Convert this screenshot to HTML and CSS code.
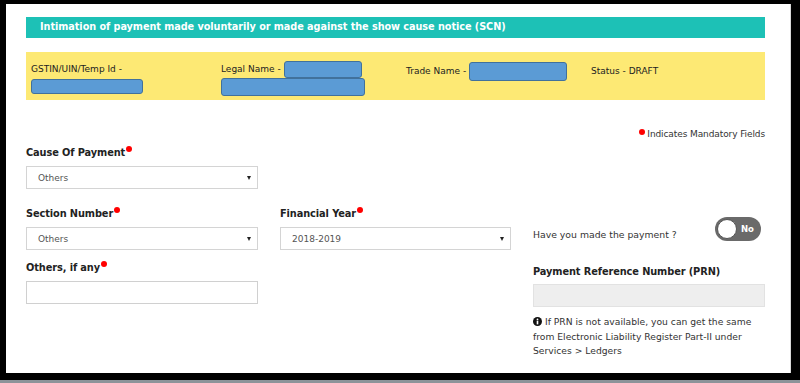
FILE: index.html
```html
<!DOCTYPE html>
<html>
<head>
<meta charset="utf-8">
<link rel="stylesheet" href="styles.css">
</head>
<body>
<div class="frame">
  <div class="panel">
    <div class="title">Intimation of payment made voluntarily or made against the show cause notice (SCN)</div>
    <div class="band">
      <div class="cell c1">
        <div class="line">GSTIN/UIN/Temp Id -</div>
        <div class="line"><span class="mask m-gstin"></span></div>
      </div>
      <div class="cell c2">
        <div class="line">Legal Name - <span class="mask m-legal1"></span></div>
        <div class="line"><span class="mask m-legal2"></span></div>
      </div>
      <div class="cell c3">
        <div class="line">Trade Name - <span class="mask m-trade"></span></div>
      </div>
      <div class="cell c4">
        <div class="line">Status - DRAFT</div>
      </div>
    </div>

    <div class="mandatory"><span class="dot"></span>Indicates Mandatory Fields</div>

    <div class="form">
      <div class="field f-cause">
        <label class="lbl">Cause Of Payment<span class="dot"></span></label>
        <div class="select"><span>Others</span><i class="caret"></i></div>
      </div>

      <div class="field f-section">
        <label class="lbl">Section Number<span class="dot"></span></label>
        <div class="select"><span>Others</span><i class="caret"></i></div>
      </div>
      <div class="field f-year">
        <label class="lbl">Financial Year<span class="dot"></span></label>
        <div class="select"><span>2018-2019</span><i class="caret"></i></div>
      </div>
      <div class="field f-paid">
        <span class="q">Have you made the payment ?</span>
        <span class="toggle"><span class="knob"></span><span class="no">No</span></span>
      </div>

      <div class="field f-others">
        <label class="lbl">Others, if any<span class="dot"></span></label>
        <div class="input"></div>
      </div>
      <div class="field f-prn">
        <label class="lbl">Payment Reference Number (PRN)</label>
        <div class="input disabled"></div>
        <p class="info"><svg class="icon" viewBox="0 0 10 10" width="9" height="9"><circle cx="5" cy="5" r="5" fill="#111"/><rect x="4.1" y="4.2" width="1.8" height="4" fill="#fff"/><circle cx="5" cy="2.7" r="1" fill="#fff"/></svg> If PRN is not available, you can get the same from Electronic Liability Register Part-II under Services &gt; Ledgers</p>
      </div>
    </div>
  </div>
  <div class="strip"></div>
</div>
</body>
</html>
```

FILE: styles.css
```css
html, body {
  margin: 0;
  padding: 0;
  background: #000;
  width: 800px;
  height: 383px;
  overflow: hidden;
  font-family: "DejaVu Sans", Verdana, sans-serif;
}
.frame {
  width: 800px;
  height: 383px;
  display: flex;
  flex-direction: column;
}
.panel {
  margin: 4px 9px 0 6px;
  height: 369px;
  background: #fff;
  border-right: 1px solid #d8d8d8;
  box-sizing: border-box;
  padding: 13px 25px 0 20px;
}
.strip {
  margin-top: 7px;
  height: 3px;
  background: #8d9399;
}
.title {
  background: #1dc1b6;
  color: #fff;
  font-weight: bold;
  font-size: 9.7px;
  height: 21px;
  line-height: 20px;
  padding-left: 14px;
  letter-spacing: -0.05px;
}
.band {
  margin-top: 14px;
  background: #fde974;
  height: 48px;
  box-sizing: border-box;
  padding: 8px 0 0 5px;
  display: grid;
  grid-template-columns: 190px 185px 185px 1fr;
  font-size: 9px;
  color: #222;
}
.line {
  height: 17px;
  display: flex;
  align-items: center;
}
.mask {
  display: inline-block;
  background: #5b9bd5;
  border: 1.5px solid #41719c;
  border-radius: 3px;
  box-sizing: border-box;
}
.m-gstin { width: 112px; height: 15px; margin-top: 2px; }
.m-legal1 { width: 78px; height: 17px; margin-left: 3px; margin-top: 1px; }
.m-legal2 { width: 144px; height: 18px; margin-top: 2px; }
.m-trade { width: 98px; height: 19px; margin-left: 3px; margin-top: 2px; }
.c3 .line { height: 21px; }
.c4 .line { height: 21px; }

.mandatory {
  margin-top: 28px;
  text-align: right;
  font-size: 9px;
  color: #333;
  height: 12px;
  line-height: 12px;
  letter-spacing: -0.1px;
}
.mandatory .dot { margin-right: 2px; vertical-align: 2px; }

.dot {
  display: inline-block;
  width: 6px;
  height: 6px;
  border-radius: 50%;
  background: #f00;
  vertical-align: 4px;
  margin-left: 1px;
}

.form {
  display: grid;
  grid-template-columns: 232px 231px 232px;
  column-gap: 22px;
  margin-top: 5px;
}
.lbl {
  display: block;
  font-weight: bold;
  font-size: 9.8px;
  color: #222;
  height: 15px;
  line-height: 15px;
  margin-bottom: 6px;
  letter-spacing: -0.1px;
}
.select, .input {
  height: 23px;
  box-sizing: border-box;
  border: 1px solid #d4d4d4;
  display: flex;
  align-items: center;
  font-size: 9px;
  color: #555;
  padding: 0 6px 0 11px;
}
.select span { flex: 1; }
.caret {
  width: 0;
  height: 0;
  border-left: 2.5px solid transparent;
  border-right: 2.5px solid transparent;
  border-top: 4px solid #222;
}
.f-cause { grid-column: 1; grid-row: 1; }
.f-section { grid-column: 1; grid-row: 2; margin-top: 17px; }
.f-year { grid-column: 2; grid-row: 2; margin-top: 17px; }
.f-paid {
  grid-column: 3; grid-row: 2;
  margin-top: 28px;
  display: flex;
  align-items: flex-start;
  justify-content: space-between;
  padding-right: 4px;
  height: 24px;
}
.q { font-size: 9.3px; color: #333; margin-top: 12px; }
.toggle {
  width: 46px;
  height: 24px;
  border-radius: 12px;
  background: #6a6a6a;
  box-sizing: border-box;
  display: flex;
  align-items: center;
  padding: 2px;
}
.knob {
  width: 20px;
  height: 20px;
  border-radius: 50%;
  background: #fff;
  box-sizing: border-box;
  border: 1px solid #555;
}
.no {
  color: #fff;
  font-weight: bold;
  font-size: 8.5px;
  margin-left: 4px;
}
.f-others { grid-column: 1; grid-row: 3; margin-top: 10px; }
.f-prn { grid-column: 3; grid-row: 3; margin-top: 14px; }
.f-prn .lbl { margin-bottom: 5px; }
.input { border-color: #d0d0d0; }
.input.disabled { background: #eeeeee; border-color: #e2e2e2; }
.info {
  margin: 8px 0 0;
  font-size: 9.2px;
  line-height: 14.5px;
  color: #333;
}
.icon { vertical-align: -1px; }
```
